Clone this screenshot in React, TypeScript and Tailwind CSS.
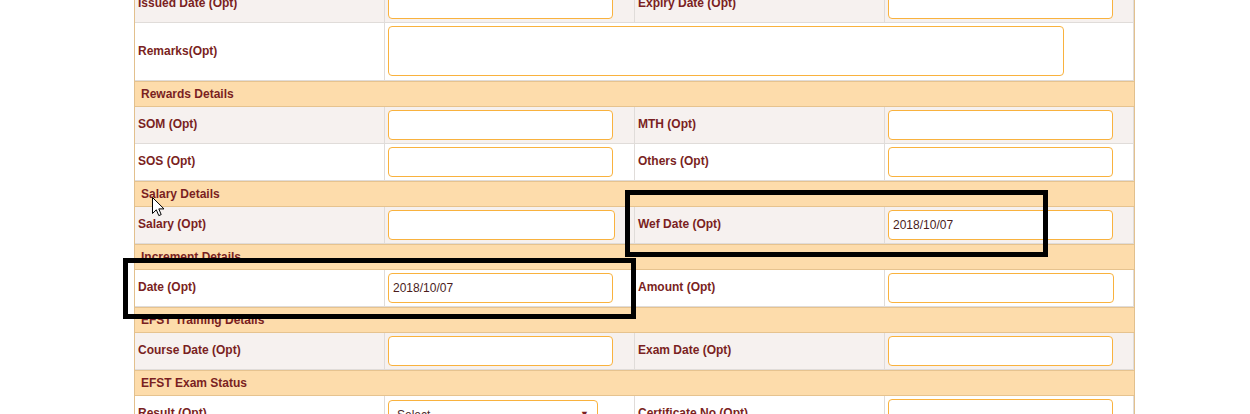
import React from 'react';

type Field = {
  label: string;
  value?: string;
  kind?: 'input' | 'select';
  w?: string;
};

type Row =
  | { type: 'header'; title: string }
  | { type: 'remarks' }
  | { type: 'pair'; left: Field; right: Field; shade?: boolean };

const rows: Row[] = [
  { type: 'pair', left: { label: 'Issued Date (Opt)' }, right: { label: 'Expiry Date (Opt)' }, shade: true },
  { type: 'remarks' },
  { type: 'header', title: 'Rewards Details' },
  { type: 'pair', left: { label: 'SOM (Opt)' }, right: { label: 'MTH (Opt)' }, shade: true },
  { type: 'pair', left: { label: 'SOS (Opt)' }, right: { label: 'Others (Opt)' } },
  { type: 'header', title: 'Salary Details' },
  {
    type: 'pair',
    left: { label: 'Salary (Opt)', w: 'w-[227px]' },
    right: { label: 'Wef Date (Opt)', value: '2018/10/07' },
    shade: true,
  },
  { type: 'header', title: 'Increment Details' },
  {
    type: 'pair',
    left: { label: 'Date (Opt)', value: '2018/10/07' },
    right: { label: 'Amount (Opt)', w: 'w-[226px]' },
  },
  { type: 'header', title: 'EFST Training Details' },
  { type: 'pair', left: { label: 'Course Date (Opt)' }, right: { label: 'Exam Date (Opt)' }, shade: true },
  { type: 'header', title: 'EFST Exam Status' },
  { type: 'pair', left: { label: 'Result (Opt)', kind: 'select' }, right: { label: 'Certificate No (Opt)' } },
];

const cellBase = 'border-r border-b border-[#e0dcd9]';

const Label = ({ text, h = 'h-[37px]' }: { text: string; h?: string }) => (
  <div className={`${cellBase} ${h} flex items-center px-[3px] pb-[2px] text-[12px] font-bold text-[#7a1f22]`}>
    {text}
  </div>
);

const Control = ({ field }: { field: Field }) => {
  if (field.kind === 'select') {
    return (
      <div className={`${cellBase} h-[37px] px-[3px] pt-[4px]`}>
        <div className="flex h-[30px] w-[210px] items-center justify-between rounded-[4px] border border-[#f9b23e] bg-white pl-[8px] pr-[8px] text-[12px] text-[#4a2a2a]">
          <span>Select</span>
          <span className="text-[9px] text-[#7a1f22]">▼</span>
        </div>
      </div>
    );
  }
  return (
    <div className={`${cellBase} h-[37px] px-[3px] pt-[3px]`}>
      <input
        readOnly
        value={field.value ?? ''}
        className={`h-[30px] ${field.w ?? 'w-[225px]'} rounded-[4px] border border-[#f9b23e] bg-white px-[4px] text-[12px] text-[#4a1c1c] outline-none`}
      />
    </div>
  );
};

const Cursor = () => (
  <svg className="absolute left-[152px] top-[197px]" width="13" height="20" viewBox="0 0 13 20">
    <path
      d="M0.5 0.5 L0.5 16.5 L4.3 12.8 L6.8 18.6 L9.2 17.6 L6.8 11.9 L12 11.9 Z"
      fill="#fff"
      stroke="#000"
      strokeWidth="1"
      strokeLinejoin="miter"
    />
  </svg>
);

export default function App() {
  return (
    <div
      className="relative h-[414px] w-[1250px] overflow-hidden bg-white"
      style={{ fontFamily: '"Liberation Sans", Arial, sans-serif' }}
    >
      <div className="ml-[134px] mt-[-14px] w-[1001px] border-x border-[#e2c08d]">
        <div className="grid grid-cols-[250px_250px_250px_249px]">
          {rows.map((row, i) => {
            if (row.type === 'header') {
              return (
                <div
                  key={i}
                  className="col-span-4 flex h-[26px] items-center border-y border-[#e6c38f] bg-[#fddcab] pl-[6px] text-[12px] font-bold text-[#7a1f22]"
                >
                  {row.title}
                </div>
              );
            }
            if (row.type === 'remarks') {
              return (
                <React.Fragment key={i}>
                  <Label text="Remarks(Opt)" h="h-[58px]" />
                  <div className={`${cellBase} col-span-3 h-[58px] px-[3px] pt-[3px]`}>
                    <textarea
                      readOnly
                      className="block h-[50px] w-[676px] resize-none rounded-[4px] border border-[#f9b23e] bg-white outline-none"
                    />
                  </div>
                </React.Fragment>
              );
            }
            const bg = row.shade ? 'bg-[#f6f1ef]' : 'bg-white';
            return (
              <div key={i} className={`col-span-4 grid grid-cols-[250px_250px_250px_249px] ${bg}`}>
                <Label text={row.left.label} />
                <Control field={row.left} />
                <Label text={row.right.label} />
                <Control field={row.right} />
              </div>
            );
          })}
        </div>
      </div>

      {/* annotation boxes */}
      <div className="absolute left-[625px] top-[190px] h-[67px] w-[423px] border-[5px] border-black" />
      <div className="absolute left-[123px] top-[258px] h-[61px] w-[513px] border-[5px] border-black" />

      <Cursor />
    </div>
  );
}
